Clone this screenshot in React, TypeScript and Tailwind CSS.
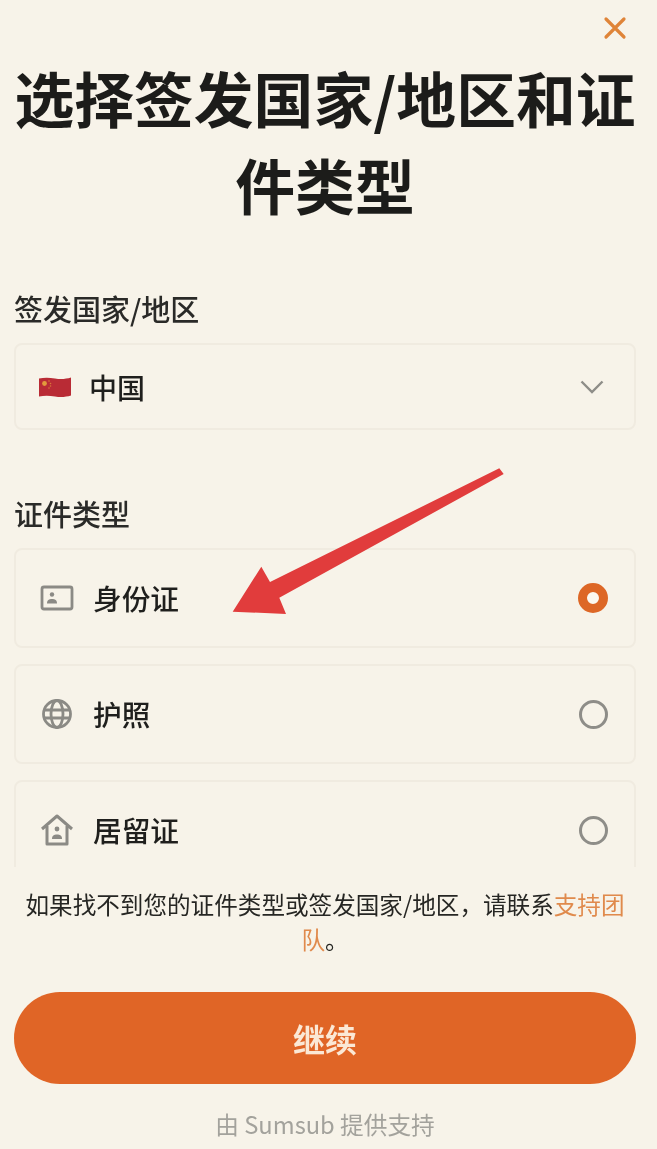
import React from "react";

const font = { fontFamily: '"Noto Sans CJK SC", "Noto Sans", sans-serif' };

function IdIcon() {
  return (
    <svg width="34" height="26" viewBox="0 0 34 26" fill="none" stroke="#8b8a85" strokeWidth="2.800">
      <rect x="2" y="2" width="30" height="22" rx="2" />
      <circle cx="12" cy="9.500" r="2.200" fill="#8b8a85" stroke="none" />
      <path d="M7 18.500c0-3.500 2-4.500 5-4.500s5 1 5 4.500z" fill="#8b8a85" stroke="none" />
    </svg>
  );
}

function GlobeIcon() {
  return (
    <svg width="32" height="32" viewBox="0 0 32 32" fill="none" stroke="#8b8a85" strokeWidth="2.800">
      <circle cx="16" cy="16" r="13.500" />
      <ellipse cx="16" cy="16" rx="6" ry="13.500" />
      <path d="M3 12h26M3 20h26" />
    </svg>
  );
}

function HouseIcon() {
  return (
    <svg width="34" height="32" viewBox="0 0 34 32" fill="none" stroke="#8b8a85" strokeWidth="3" strokeLinejoin="round">
      <path d="M2 15 17 2l15 13M7 12v18h20V12" />
      <circle cx="17" cy="15" r="2.400" fill="#8b8a85" stroke="none" />
      <path d="M12 25c0-3.500 2-4.500 5-4.500s5 1 5 4.500z" fill="#8b8a85" stroke="none" />
    </svg>
  );
}

function Flag() {
  return (
    <svg width="34" height="24" viewBox="0 0 34 24">
      <path d="M1 3.500c5-1 10-1 16 0s11 .5 16-1v18c-5 1.500-10 2-16 1s-11-1-16 0z" fill="#b92b35" />
      <circle cx="6.500" cy="8.500" r="2.400" fill="#e39a3c" />
      <circle cx="11" cy="6" r="0.800" fill="#d8763a" />
      <circle cx="12.500" cy="8.500" r="0.800" fill="#d8763a" />
      <circle cx="12.500" cy="11" r="0.800" fill="#d8763a" />
      <circle cx="11" cy="13" r="0.800" fill="#d8763a" />
    </svg>
  );
}

function Radio({ on }: { on?: boolean }) {
  return on ? (
    <span className="block w-[30px] h-[30px] rounded-full border-[9px] border-[#dd6726] bg-[#fbf8f0]" />
  ) : (
    <span className="block w-[29px] h-[29px] rounded-full border-[3px] border-[#8e8d88]" />
  );
}

function Option({ icon, label, on }: { icon: React.ReactNode; label: string; on?: boolean }) {
  return (
    <div className="flex items-center h-[100px] shrink-0 rounded-lg border-2 border-[#f0ebe0] pl-[24px] pr-[26px]">
      <span className="w-[34px] flex justify-center">{icon}</span>
      <span className="ml-[19px] flex-1 text-[28.700px] font-medium text-[#1f1f1d]">{label}</span>
      <Radio on={on} />
    </div>
  );
}

export default function App() {
  return (
    <div className="relative h-[1149px] w-[657px] overflow-hidden bg-[#f7f3e9]">
      <div style={font} className="h-full blur-[0.5px] flex flex-col pl-[14px] pr-[21px] text-[#2a2a28]">
        <div className="h-[56px] shrink-0 flex justify-end items-center pr-[9px]">
          <svg width="24" height="24" viewBox="0 0 24 24" fill="none" stroke="#df8438" strokeWidth="3.200" strokeLinecap="round">
            <path d="M3 3l18 18M21 3 3 21" />
          </svg>
        </div>
        <h1 className="text-[59.800px] leading-[87px] font-bold text-center text-[#1c1c1a] whitespace-nowrap -mt-[2px]">
          选择签发国家/地区和证
          <br />
          件类型
        </h1>
        <div className="flex-1 min-h-0 overflow-hidden flex flex-col">
          <div className="mt-[60px] text-[29px] leading-[40px] h-[40px] font-medium">签发国家/地区</div>
          <div className="mt-[15px] h-[87px] shrink-0 flex items-center rounded-lg border-2 border-[#f0ebe0] pl-[22px] pr-[30px]">
            <Flag />
            <span className="ml-[17px] flex-1 text-[28px] font-medium text-[#1f1f1d]">中国</span>
            <svg width="24" height="14" viewBox="0 0 24 14" fill="none" stroke="#8e8d88" strokeWidth="2.400">
              <path d="M1.500 1.500 12 12 22.500 1.500" />
            </svg>
          </div>
          <div className="mt-[63px] text-[29px] leading-[40px] h-[40px] font-medium">证件类型</div>
          <div className="mt-[15px] flex flex-col gap-[16px]">
            <Option icon={<IdIcon />} label="身份证" on />
            <Option icon={<GlobeIcon />} label="护照" />
            <Option icon={<HouseIcon />} label="居留证" />
          </div>
        </div>
        <div className="shrink-0 h-[282px] flex flex-col items-center">
          <p className="mt-[20px] text-[23.600px] leading-[35px] text-center text-[#262623] w-[610px]">
            如果找不到您的证件类型或签发国家/地区，请联系<span className="text-[#e08a4c]">支持团队</span>。
          </p>
          <button className="mt-[35px] h-[92px] w-full rounded-full bg-[#e06526] text-[32px] font-bold text-[#fbe8d5]">继续</button>
          <div className="mt-[24px] text-[23.700px] leading-[32px] text-[#a3a29c]">由 Sumsub 提供支持</div>
        </div>
      </div>
      <svg className="absolute left-0 top-0 pointer-events-none" width="657" height="1149" viewBox="0 0 657 1149">
        <polygon points="499.300,468.300 503.700,474 279.300,597.700 286,614 232.700,611.700 261.300,566.700 270,582" fill="#e13c3c" />
      </svg>
    </div>
  );
}
